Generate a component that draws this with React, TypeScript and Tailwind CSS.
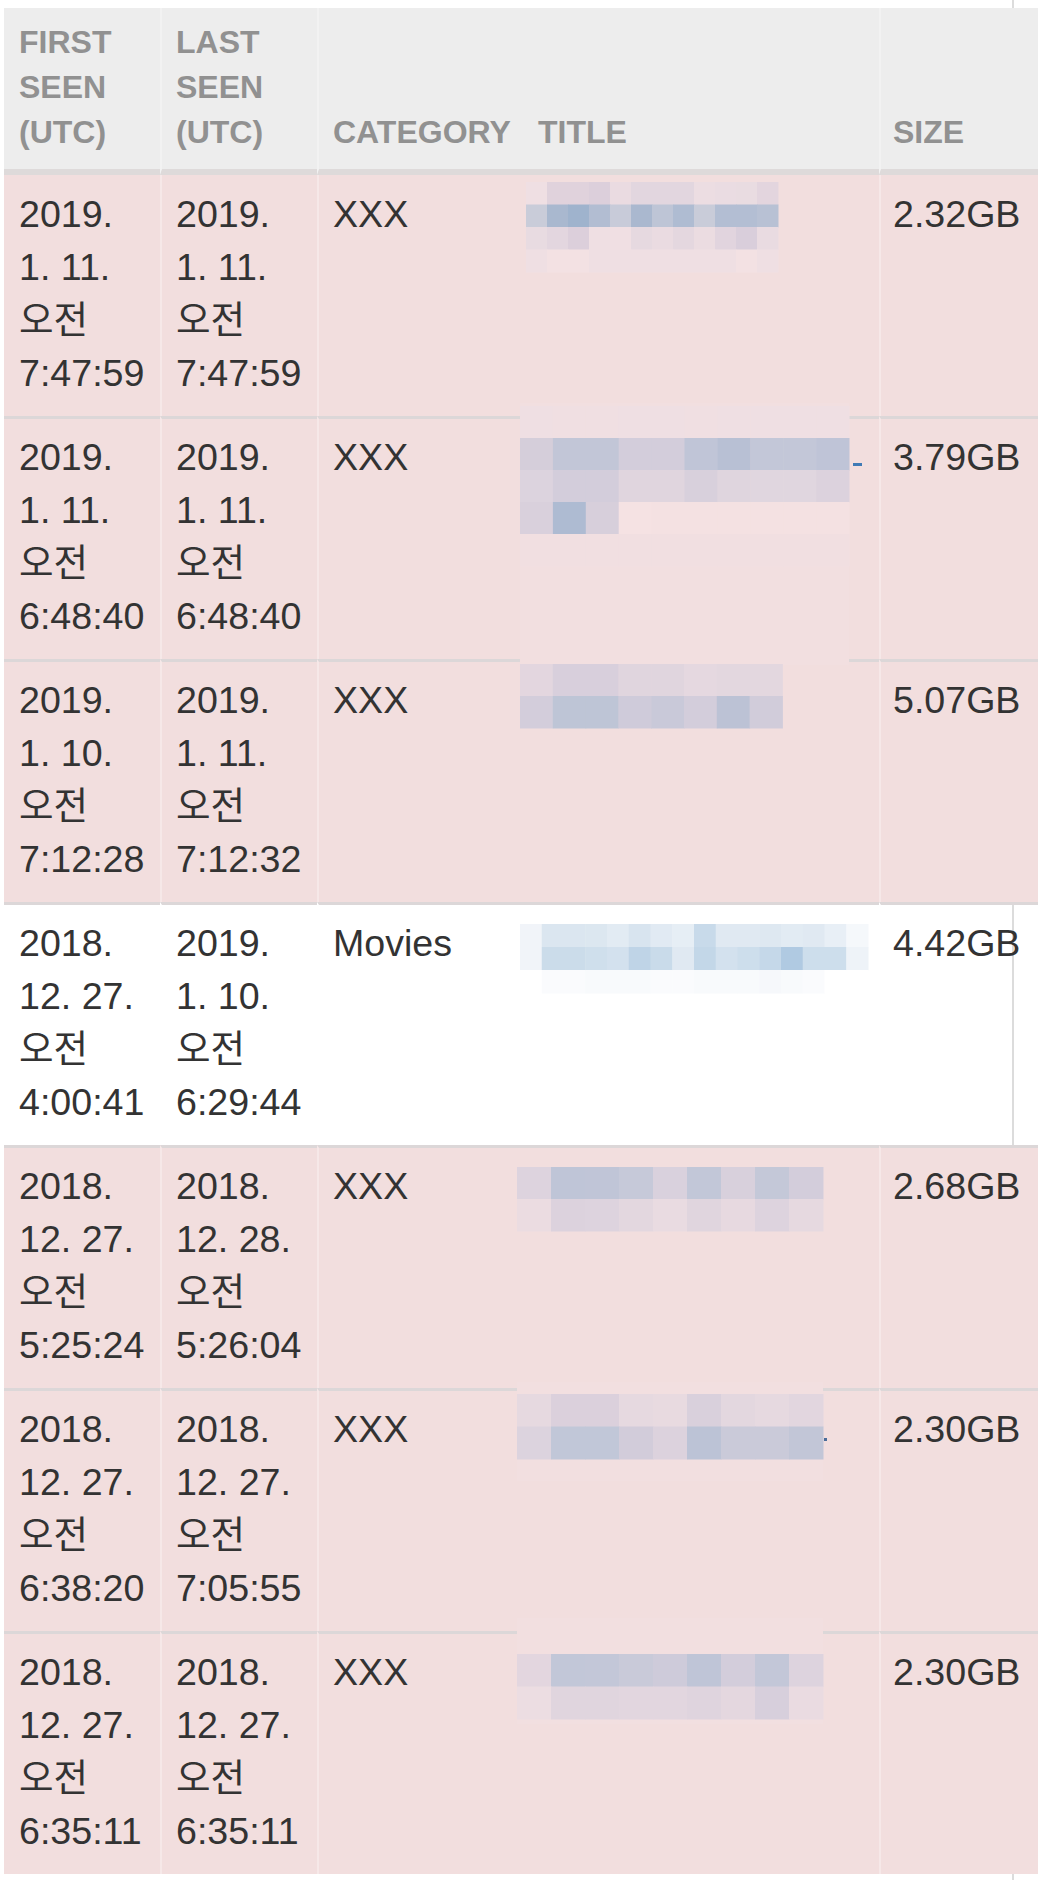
import React from "react";

type Mark = { x: number; y: number; w: number; h: number; color: string };

interface Mosaic {
  x: number;
  y: number;
  cw: number;
  ch: number;
  rows: string[][];
  bg?: { top: number; bottom: number; color: string };
  marks?: Mark[];
}

interface Row {
  first: string[];
  last: string[];
  category: string;
  size: string;
  danger: boolean;
  mosaic: Mosaic;
}

const F = "#efdfe3"; // faint tile on pink

const rows: Row[] = [
  {
    first: ["2019.", "1. 11.", "오전", "7:47:59"],
    last: ["2019.", "1. 11.", "오전", "7:47:59"],
    category: "XXX",
    size: "2.32GB",
    danger: true,
    mosaic: {
      x: 4,
      y: 7,
      cw: 21,
      ch: 22.5,
      rows: [
        [F, "#e0d2dc", "#e0d2dc", "#dccfdb", "#eadbe1", "#e2d6df", "#e2d6df", "#e2d6df", "#ecdde2", "#eadce2", "#e9dce1", "#e3d5de"],
        ["#c9ccd9", "#a9b8cf", "#9fb3cd", "#b2bdd2", "#c8cbd9", "#aab8cf", "#bec5d6", "#afbcd2", "#c9ccd9", "#b3bed3", "#b3bed3", "#b8c1d4"],
        ["#e8dbe1", "#e3d6df", "#dccfdb", "#efdfe3", "#f0dfe3", "#e6d9e0", "#eadbe1", "#e4d7df", "#ebdce1", "#e1d4de", "#d9cedb", "#e9dbe1"],
        [F, "#f3e1e3", "#f3e1e3", F, F, F, F, F, F, F, "#f3e1e3", F],
      ],
    },
  },
  {
    first: ["2019.", "1. 11.", "오전", "6:48:40"],
    last: ["2019.", "1. 11.", "오전", "6:48:40"],
    category: "XXX",
    size: "3.79GB",
    danger: true,
    mosaic: {
      x: -2,
      y: -13,
      cw: 32.9,
      ch: 32,
      bg: { top: -16, bottom: 246, color: "#f2dfe0" },
      rows: [
        [F, "#f0dfe2", "#f0dfe2", F, F, "#f0dfe2", F, F, F, F],
        ["#d5ceda", "#c2c6d7", "#c2c6d7", "#d3cddb", "#d3cddb", "#c0c5d7", "#b8c0d4", "#c3c7d8", "#c3c7d8", "#bfc4d7"],
        ["#dcd3de", "#d3cddb", "#d3cddb", "#e0d5de", "#e0d5de", "#d8d0dc", "#dfd5de", "#e0d6df", "#e0d6df", "#dcd2dd"],
        ["#d9d0dc", "#aebbd2", "#d7cfdb", "#f5e2e3", "#f4e1e2", "#f4e1e2", "#f4e1e2", "#f4e1e2", "#f4e1e2", "#f4e1e2"],
        ["#f1dfe1", "#f1dfe1", "#f1dfe1", "#f1dfe1", "#f1dfe1", "#f1dfe1", "#f1dfe1", "#f1dfe1", "#f1dfe1", "#f1dfe1"],
      ],
      marks: [{ x: 331, y: 44, w: 9, h: 3, color: "#3f7ab5" }],
    },
  },
  {
    first: ["2019.", "1. 10.", "오전", "7:12:28"],
    last: ["2019.", "1. 11.", "오전", "7:12:32"],
    category: "XXX",
    size: "5.07GB",
    danger: true,
    mosaic: {
      x: -2,
      y: 2,
      cw: 32.8,
      ch: 32,
      rows: [
        ["#e3d6df", "#d8cfdc", "#d8cfdc", "#e0d5de", "#e0d5de", "#e5d8e0", "#e3d7df", "#e3d7df"],
        ["#d3cddb", "#bec5d6", "#bec5d6", "#cfcbda", "#c9c9d9", "#d3cddb", "#bcc2d5", "#d1ccda"],
      ],
    },
  },
  {
    first: ["2018.", "12. 27.", "오전", "4:00:41"],
    last: ["2019.", "1. 10.", "오전", "6:29:44"],
    category: "Movies",
    size: "4.42GB",
    danger: false,
    mosaic: {
      x: -2,
      y: 19,
      cw: 21.75,
      ch: 23,
      rows: [
        ["#f1f4f9", "#dbe6f0", "#dbe6f0", "#dce7f0", "#e2ebf3", "#d8e4ef", "#e1eaf3", "#e6eef5", "#c8daea", "#e0e9f2", "#e0e9f2", "#dee8f1", "#e2ebf3", "#e0e9f2", "#e8eff6", "#f5f8fb"],
        ["#f1f4f9", "#cbdcea", "#cbdcea", "#cfdfec", "#d3e1ee", "#bfd4e7", "#c9dbea", "#e0e9f2", "#c3d7e8", "#d3e1ee", "#cddeec", "#c5d8e9", "#b0cae2", "#cddeec", "#cddeec", "#eef3f8"],
        ["#ffffff", "#fafbfd", "#fafbfd", "#f8fafc", "#f8fafc", "#f8fafc", "#fafbfd", "#fafbfd", "#f8fafc", "#f8fafc", "#f8fafc", "#f6f8fb", "#f8fafc", "#fafbfd", "#ffffff", "#ffffff"],
      ],
    },
  },
  {
    first: ["2018.", "12. 27.", "오전", "5:25:24"],
    last: ["2018.", "12. 28.", "오전", "5:26:04"],
    category: "XXX",
    size: "2.68GB",
    danger: true,
    mosaic: {
      x: -5,
      y: 19,
      cw: 34,
      ch: 32,
      rows: [
        ["#ddd3de", "#bfc5d7", "#c0c5d7", "#c6c9d9", "#d9d1dd", "#c2c7d8", "#d8d0dc", "#c4c8d8", "#d3cddb"],
        ["#ebdce1", "#dcd2dd", "#ddd3de", "#e3d7df", "#e9dbe1", "#e0d5de", "#e7d9e0", "#ddd3de", "#e6d9e0"],
      ],
    },
  },
  {
    first: ["2018.", "12. 27.", "오전", "6:38:20"],
    last: ["2018.", "12. 27.", "오전", "7:05:55"],
    category: "XXX",
    size: "2.30GB",
    danger: true,
    mosaic: {
      x: -5,
      y: 3,
      cw: 34,
      ch: 32.5,
      bg: { top: -9, bottom: 90, color: "#f2dfe0" },
      rows: [
        ["#e6d9e0", "#dbd0dc", "#dbd0dc", "#e6d9e0", "#e8dae0", "#d9d0dc", "#e3d7df", "#e6d9e0", "#e2d6df"],
        ["#dcd3de", "#c1c7d8", "#c1c7d8", "#d2ccda", "#dcd2dd", "#bcc3d6", "#cacad9", "#cacad9", "#c2c6d7"],
      ],
      marks: [{ x: 302, y: 47, w: 3, h: 3, color: "#4a6c99" }],
    },
  },
  {
    first: ["2018.", "12. 27.", "오전", "6:35:11"],
    last: ["2018.", "12. 27.", "오전", "6:35:11"],
    category: "XXX",
    size: "2.30GB",
    danger: true,
    mosaic: {
      x: -5,
      y: 20,
      cw: 34,
      ch: 32.5,
      bg: { top: -16, bottom: 90, color: "#f2dfe0" },
      rows: [
        ["#e3d6df", "#c2c7d8", "#c3c7d8", "#c9cad9", "#cecbda", "#bfc5d7", "#d3cddb", "#c3c7d8", "#ddd3de"],
        ["#ecdde2", "#e0d5de", "#e0d5de", "#e2d6df", "#e2d6df", "#dfd4de", "#e4d7df", "#d7cfdc", "#eadbe1"],
      ],
    },
  },
];

// Censored title: a pixelated block laid over the cell
function MosaicBlock({ m }: { m: Mosaic }) {
  const cols = m.rows[0].length;
  const top = m.bg ? Math.min(m.bg.top, m.y) : m.y;
  const off = m.y - top;
  const width = cols * m.cw;
  const height = Math.max(off + m.rows.length * m.ch, m.bg ? m.bg.bottom - top : 0);
  return (
    <svg
      className="absolute z-10 overflow-visible pointer-events-none"
      style={{ left: m.x, top }}
      width={width}
      height={height}
      viewBox={`0 0 ${width} ${height}`}
      aria-hidden="true"
    >
      {m.bg && <rect x={0} y={0} width={width} height={m.bg.bottom - top} fill={m.bg.color} />}
      {m.rows.map((r, ri) =>
        r.map((c, ci) => (
          <rect
            key={`${ri}-${ci}`}
            x={ci * m.cw}
            y={off + ri * m.ch}
            width={m.cw + 0.5}
            height={m.ch + 0.5}
            fill={c}
          />
        ))
      )}
      {m.marks?.map((k, i) => (
        <rect key={i} x={k.x - m.x} y={k.y - top} width={k.w} height={k.h} fill={k.color} />
      ))}
    </svg>
  );
}

function Lines({ lines }: { lines: string[] }) {
  return (
    <>
      {lines.map((l, i) => (
        <div key={i} className="whitespace-nowrap">
          {l}
        </div>
      ))}
    </>
  );
}

export default function App() {
  return (
    <div className="w-[1038px] min-h-[1880px] overflow-hidden bg-white">
      <div
        className="w-[1014px] min-h-[1880px] border-r-2 border-[#dcdcdc] pt-[8px] pl-[4px]"
        style={{ fontFamily: '"Liberation Sans", Arial, "Noto Sans CJK KR", sans-serif' }}
      >
        <table className="w-[1060px] table-fixed border-separate border-spacing-0">
          <colgroup>
            <col className="w-[156px]" />
            <col className="w-[157px]" />
            <col className="w-[205px]" />
            <col className="w-[357px]" />
            <col className="w-[185px]" />
          </colgroup>
          <thead>
            <tr className="bg-[#ededed] text-[32px] leading-[45px] font-bold text-[#919191] text-left">
              <th className="align-bottom pt-[12px] pb-[14px] px-[15px] border-b-[6px] border-[#dedada]">
                FIRST<br />SEEN<br />(UTC)
              </th>
              <th className="align-bottom pt-[12px] pb-[14px] pl-[14px] pr-[8px] border-b-[6px] border-l-2 border-b-[#dedada] border-l-[#f2f2f2]">
                LAST<br />SEEN<br />(UTC)
              </th>
              <th className="align-bottom pt-[12px] pb-[14px] pl-[14px] pr-[2px] border-b-[6px] border-l-2 border-b-[#dedada] border-l-[#f2f2f2]">
                CATEGORY
              </th>
              <th className="align-bottom pt-[12px] pb-[14px] px-[16px] border-b-[6px] border-[#dedada]">
                TITLE
              </th>
              <th className="align-bottom pt-[12px] pb-[14px] pl-[12px] border-b-[6px] border-l-2 border-b-[#dedada] border-l-[#f2f2f2]">
                SIZE
              </th>
            </tr>
          </thead>
          <tbody className="text-[37.6px] leading-[53px] text-[#333333]">
            {rows.map((r, i) => {
              const bg = r.danger ? "bg-[#f2dede]" : "bg-transparent";
              const top = i === 0 ? "pt-[13px]" : "pt-[12px] border-t-[3px] border-t-[#dcd7d8]";
              const sep = "border-l-2 border-l-white/30";
              return (
                <tr key={i} className={bg}>
                  <td className={`align-top pb-[16px] px-[15px] ${top}`}>
                    <Lines lines={r.first} />
                  </td>
                  <td className={`align-top pb-[16px] pl-[14px] pr-[4px] ${top} ${sep}`}>
                    <Lines lines={r.last} />
                  </td>
                  <td className={`align-top pb-[16px] pl-[14px] pr-[4px] ${top} ${sep}`}>
                    {r.category}
                  </td>
                  <td className={`relative align-top pb-[16px] px-[16px] ${top}`}>
                    <MosaicBlock m={r.mosaic} />
                  </td>
                  <td className={`align-top pb-[16px] pl-[12px] whitespace-nowrap ${top} ${sep}`}>
                    {r.size}
                  </td>
                </tr>
              );
            })}
          </tbody>
        </table>
      </div>
    </div>
  );
}
